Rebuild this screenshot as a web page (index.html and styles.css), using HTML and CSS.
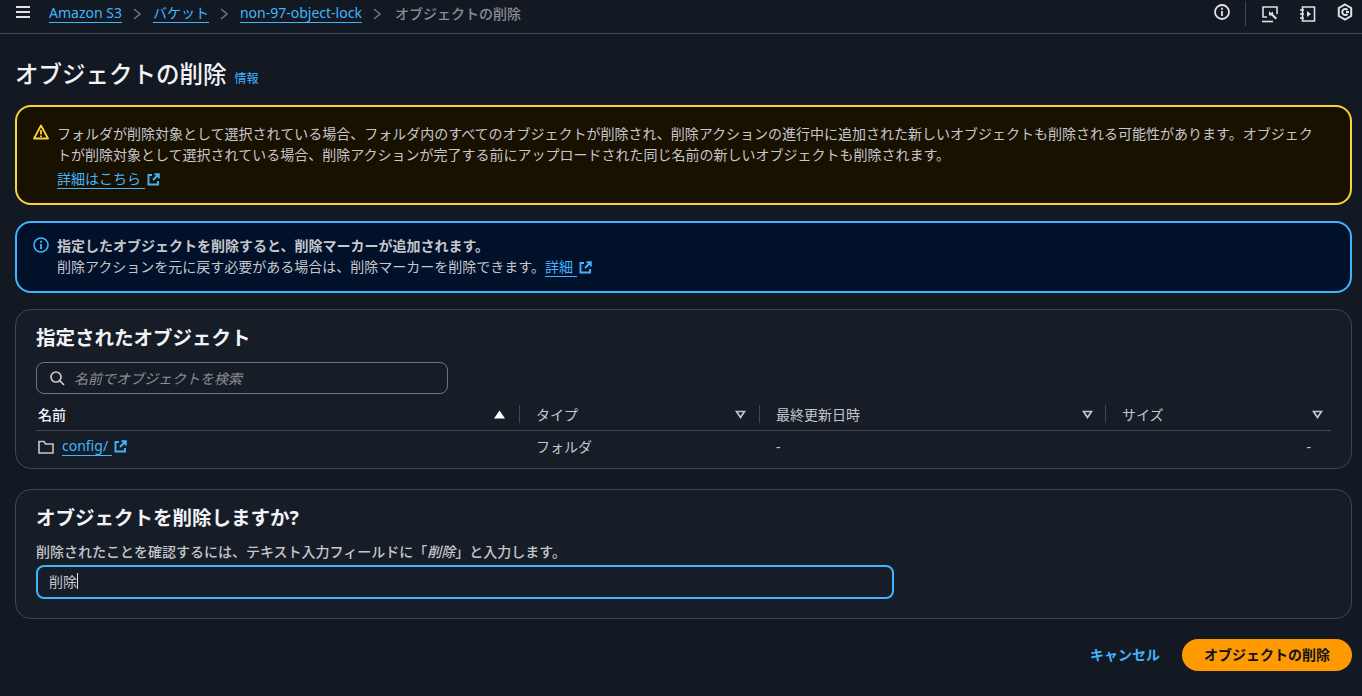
FILE: index.html
```html
<!DOCTYPE html>
<html lang="ja">
<head>
<meta charset="utf-8">
<title>オブジェクトの削除</title>
<link rel="stylesheet" href="styles.css">
</head>
<body>
<header class="topbar">
  <svg class="menu" width="16" height="14" viewBox="0 0 16 14"><path d="M1 2h14M1 7h14M1 12h14" stroke="#dfe1e5" stroke-width="1.800" fill="none"/></svg>
  <nav class="crumbs">
    <a class="link">Amazon S3</a>
    <svg class="chev" width="10" height="14" viewBox="0 0 10 14"><path d="M2 2l6 5-6 5" fill="none" stroke="#6d7480" stroke-width="1.6"/></svg>
    <a class="link">バケット</a>
    <svg class="chev" width="10" height="14" viewBox="0 0 10 14"><path d="M2 2l6 5-6 5" fill="none" stroke="#6d7480" stroke-width="1.6"/></svg>
    <a class="link">non-97-object-lock</a>
    <svg class="chev" width="10" height="14" viewBox="0 0 10 14"><path d="M2 2l6 5-6 5" fill="none" stroke="#6d7480" stroke-width="1.6"/></svg>
    <span class="current">オブジェクトの削除</span>
  </nav>
  <div class="tools">
    <svg class="t1" width="16" height="16" viewBox="0 0 16 16"><circle cx="8" cy="8" r="7" fill="none" stroke="#dfe1e5" stroke-width="1.800"/><path d="M8 7v5" stroke="#dfe1e5" stroke-width="1.800"/><path d="M8 3.700v2" stroke="#dfe1e5" stroke-width="1.800"/></svg>
    <span class="tool-sep"></span>
    <svg class="t2" width="18" height="18" viewBox="0 0 18 18"><path d="M6 12H2V2h14v7" fill="none" stroke="#dfe1e5" stroke-width="1.6"/><path d="M1 16.500h11" stroke="#dfe1e5" stroke-width="1.6"/><path d="M8 6l2 2 2-1.500 0 2.500 4 4-1.500 1.500-4-4-2.500 0z" fill="#dfe1e5"/></svg>
    <svg class="t3" width="17" height="18" viewBox="0 0 17 18"><path d="M3.500 2h12v14h-12z" fill="none" stroke="#dfe1e5" stroke-width="1.6"/><path d="M1 5h4M1 9h4M1 13h4" stroke="#dfe1e5" stroke-width="1.500"/><path d="M8 6l4 3-4 3z" fill="#dfe1e5"/></svg>
    <svg class="t4" width="16" height="18" viewBox="0 0 16 18"><path d="M8 1.500l6.200 3.500v8L8 16.500 1.800 13V5z" fill="none" stroke="#dfe1e5" stroke-width="2"/><path d="M10.500 7A3 3 0 1 0 10.500 11" fill="none" stroke="#dfe1e5" stroke-width="2"/><path d="M9 9h3" stroke="#dfe1e5" stroke-width="2"/></svg>
  </div>
</header>

<main class="content">
  <div class="title-row">
    <h1>オブジェクトの削除</h1>
    <a class="info-link">情報</a>
  </div>

  <section class="alert warn">
    <svg class="alert-icon" width="16" height="16" viewBox="0 0 16 16"><path d="M8 1.500L15 14.500H1z" fill="none" stroke="#fbd332" stroke-width="1.800" stroke-linejoin="round"/><path d="M8 6v4.500M8 11.500v1.500" stroke="#fbd332" stroke-width="1.800"/></svg>
    <div class="alert-body">
      <p>フォルダが削除対象として選択されている場合、フォルダ内のすべてのオブジェクトが削除され、削除アクションの進行中に追加された新しいオブジェクトも削除される可能性があります。オブジェクトが削除対象として選択されている場合、削除アクションが完了する前にアップロードされた同じ名前の新しいオブジェクトも削除されます。</p>
      <p class="more"><a class="link pad">詳細はこちら</a><svg class="ext" width="13" height="13" viewBox="0 0 13 13"><path d="M5 2H1.500v9.500H11V8M7.500 1.200h4.300v4.300M11.500 1.500L6 7" fill="none" stroke="#42b4ff" stroke-width="1.900"/></svg></p>
    </div>
  </section>

  <section class="alert note">
    <svg class="alert-icon" width="16" height="16" viewBox="0 0 16 16"><circle cx="8" cy="8" r="7" fill="none" stroke="#42b4ff" stroke-width="1.600"/><path d="M8 7v5M8 3.700v2" stroke="#42b4ff" stroke-width="1.800"/></svg>
    <div class="alert-body">
      <p class="strong">指定したオブジェクトを削除すると、削除マーカーが追加されます。</p>
      <p>削除アクションを元に戻す必要がある場合は、削除マーカーを削除できます。<a class="link pad">詳細</a><svg class="ext" width="13" height="13" viewBox="0 0 13 13"><path d="M5 2H1.500v9.500H11V8M7.500 1.200h4.300v4.300M11.500 1.500L6 7" fill="none" stroke="#42b4ff" stroke-width="1.900"/></svg></p>
    </div>
  </section>

  <section class="card objects">
    <h2>指定されたオブジェクト</h2>
    <div class="search">
      <svg width="16" height="16" viewBox="0 0 16 16"><circle cx="7" cy="7" r="5" fill="none" stroke="#c6c6cd" stroke-width="1.700"/><path d="M10.700 10.700L15 15" stroke="#c6c6cd" stroke-width="1.700"/></svg>
      <span>名前でオブジェクトを検索</span>
    </div>
    <div class="table">
      <div class="thead">
        <div class="th name"><b>名前</b><svg class="sort" width="11" height="9" viewBox="0 0 11 9"><path d="M5.500 0.500L11 8.500H0z" fill="#fff"/></svg></div>
        <div class="th type"><span>タイプ</span><svg class="sort" width="11" height="9" viewBox="0 0 11 9"><path d="M1.500 1.500h8L5.500 7.500z" fill="none" stroke="#c6c6cd" stroke-width="1.700"/></svg></div>
        <div class="th date"><span>最終更新日時</span><svg class="sort" width="11" height="9" viewBox="0 0 11 9"><path d="M1.500 1.500h8L5.500 7.500z" fill="none" stroke="#c6c6cd" stroke-width="1.700"/></svg></div>
        <div class="th size"><span>サイズ</span><svg class="sort" width="11" height="9" viewBox="0 0 11 9"><path d="M1.500 1.500h8L5.500 7.500z" fill="none" stroke="#c6c6cd" stroke-width="1.700"/></svg></div>
      </div>
      <div class="tr">
        <div class="td name"><svg class="folder" width="16" height="14" viewBox="0 0 16 14"><path d="M1 1.500h5l1.500 2.500H15v9H1z" fill="none" stroke="#c6c6cd" stroke-width="1.600"/></svg><a class="link pad">config/</a><svg class="ext" width="13" height="13" viewBox="0 0 13 13"><path d="M5 2H1.500v9.500H11V8M7.500 1.200h4.300v4.300M11.500 1.500L6 7" fill="none" stroke="#42b4ff" stroke-width="1.900"/></svg></div>
        <div class="td type">フォルダ</div>
        <div class="td date">-</div>
        <div class="td size">-</div>
      </div>
    </div>
  </section>

  <section class="card confirm">
    <h2>オブジェクトを削除しますか?</h2>
    <label>削除されたことを確認するには、テキスト入力フィールドに「<i>削除</i>」と入力します。</label>
    <div class="input"><span>削除</span><span class="caret"></span></div>
  </section>

  <div class="actions">
    <a class="cancel">キャンセル</a>
    <a class="primary">オブジェクトの削除</a>
  </div>
</main>
</body>
</html>
```

FILE: styles.css
```css
* { box-sizing: border-box; }
html, body { margin: 0; height: 100%; }
body {
  background: #131922;
  color: #c6c6cd;
  font-family: "Noto Sans", "Noto Sans CJK JP", sans-serif;
  font-size: 14px;
  line-height: 21px;
  overflow: hidden;
}
p, h1, h2 { margin: 0; }
.link { color: #42b4ff; border-bottom: 1px solid #42b4ff; line-height: 18px; display: inline-block; }
.pad { padding-right: 4px; }

.topbar {
  height: 34px;
  display: flex;
  align-items: center;
  padding: 0 9px 6px 15px;
  border-bottom: 1px solid #424650;
}
.menu { margin: 0 18px 4px 0; }
.crumbs { display: flex; align-items: center; gap: 10.5px; flex: 1; }
.current { color: #8c8c94; font-weight: 500; margin-left: 2px; }
.chev { flex: none; }
.tools { display: flex; align-items: center; }
.t1, .t4 { margin-bottom: 3px; }
.tool-sep { width: 1px; height: 25px; background: #424650; margin: 0 15px; }
.t2 { margin-right: 20px; }
.t3 { margin-right: 21px; }

.content { padding: 0 10px 0 15px; }
.title-row { display: flex; align-items: baseline; gap: 8px; height: 71px; padding-top: 22px; }
h1 { font-size: 23.5px; line-height: 36px; font-weight: 500; color: #f3f3f7; }
.info-link { color: #42b4ff; font-size: 12px; }

.alert {
  display: flex;
  gap: 8px;
  border-radius: 16px;
  border: 2px solid;
  padding: 16px 24px 0 16px;
  margin-bottom: 16px;
}
.warn { height: 100px; background: #191100; border-color: #fbd332; }
.note { height: 72px; background: #001129; border-color: #42b4ff; padding-top: 12px; }
.alert-icon { flex: none; margin-top: 1px; }
.note .alert-icon { margin-top: 2px; }
.alert-body { flex: 1; color: #c6c6cd; }
.more { margin-top: 3px; }
.strong { font-weight: 700; }
.ext { margin-left: 2px; vertical-align: -2px; flex: none; }

.card {
  background: #161d26;
  border: 1px solid #424650;
  border-radius: 16px;
  padding: 0 20px;
  color: #c6c6cd;
}
.card h2 { font-size: 19.5px; line-height: 24px; font-weight: 700; color: #f3f3f7; }
.objects { height: 160px; margin-bottom: 20px; padding-top: 16px; }
.search {
  margin-top: 12px;
  width: 412px;
  height: 32px;
  border: 1px solid #6d7480;
  border-radius: 8px;
  display: flex;
  align-items: center;
  gap: 9px;
  padding-left: 12px;
  font-style: italic;
  color: #8c8c94;
}
.table { margin-top: 3px; }
.thead, .tr { display: grid; grid-template-columns: 484px 240px 346px 226px; }
.thead { height: 34px; border-bottom: 1px solid #424650; align-items: center; padding-top: 1px; }
.th { display: flex; align-items: center; justify-content: space-between; padding-right: 14px; padding-left: 16px; height: 18px; border-right: 1px solid #424650; }
.th.name { padding-left: 2px; }
.th.name b { color: #f3f3f7; font-weight: 500; }
.th.type { padding-right: 13px; }
.th.date { padding-right: 12px; }
.th.size { border-right: 0; padding-right: 9px; }
.tr { height: 34px; align-items: center; }
.td { padding-left: 16px; margin-top: -3px; }
.td.name { padding-left: 2px; display: flex; align-items: center; }
.folder { margin-right: 8px; }
.td.size { text-align: right; padding-right: 21px; }

.confirm { height: 130px; margin-bottom: 20px; padding-top: 16px; }
.confirm label { display: block; margin-top: 11px; font-weight: 500; }
.input {
  margin-top: 3px;
  width: 858px;
  height: 34px;
  border: 2px solid #42b4ff;
  border-radius: 8px;
  padding: 0 0 2px 11px;
  display: flex;
  align-items: center;
  color: #c6c6cd;
}
.caret { width: 1px; height: 16px; background: #dfe1e5; }

.actions { display: flex; justify-content: flex-end; align-items: center; gap: 22px; }
.cancel { color: #42b4ff; font-weight: 700; margin-top: -2px; }
.primary {
  width: 170px;
  height: 32px;
  border-radius: 16px;
  background: #ff9900;
  color: #0f141a;
  font-weight: 700;
  padding-bottom: 2px;
  display: flex;
  align-items: center;
  justify-content: center;
}
```
